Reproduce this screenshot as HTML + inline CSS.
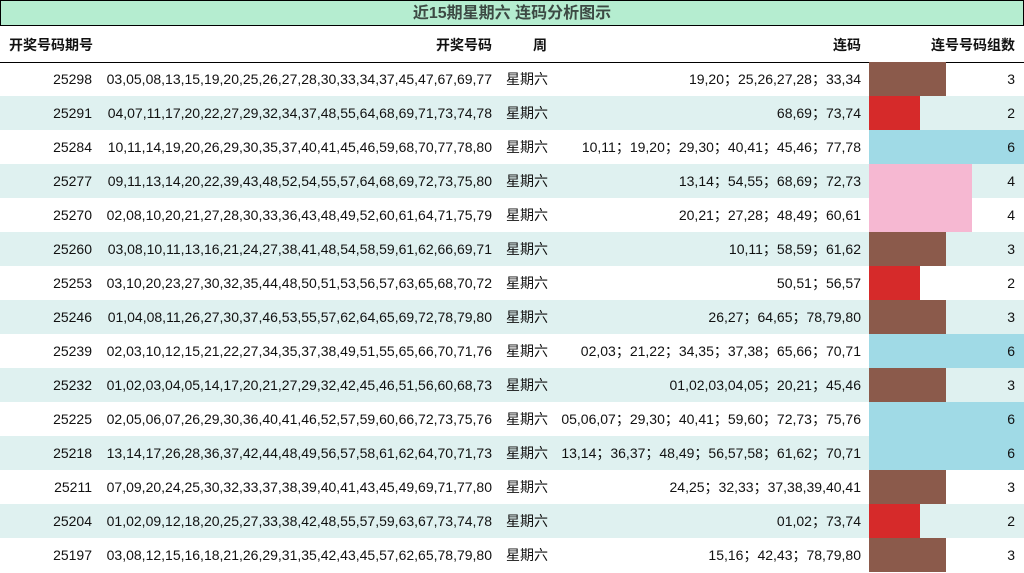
<!DOCTYPE html><html><head><meta charset="utf-8"><style>
body{margin:0;width:1024px;height:573px;overflow:hidden;background:#fff;font-family:"Liberation Sans","Noto Sans CJK SC",sans-serif;font-size:14px;color:#111}
.t{position:absolute;left:0;top:0;width:1022px;height:24px;background:#b5edd0;border:1px solid #000;text-align:center;font-weight:bold;font-size:16px;line-height:25px;color:#3d4a44}
.r{position:absolute;left:0;width:1024px;height:34px;line-height:34px}
.r div{position:absolute;top:0;white-space:nowrap}
.a{right:932px}.b{right:532px}.c{left:506px}.d{right:163px}.n{right:9px}
.bar{height:34px;left:869px}
.h{font-weight:bold;top:27px;height:34px;border-bottom:1px solid #000}
.alt{background:#dff1f0}
</style></head><body>
<div class="t">近15期星期六 连码分析图示</div>
<div class="r h" style="top:28px"><div class="a" style="left:9px;right:auto">开奖号码期号</div><div class="b">开奖号码</div><div class="c" style="left:533px">周</div><div class="d">连码</div><div class="n">连号号码组数</div></div>
<div id="rows"></div>
<script>
var d=[["25298","03,05,08,13,15,19,20,25,26,27,28,30,33,34,37,45,47,67,69,77","19,20；25,26,27,28；33,34",3],
["25291","04,07,11,17,20,22,27,29,32,34,37,48,55,64,68,69,71,73,74,78","68,69；73,74",2],
["25284","10,11,14,19,20,26,29,30,35,37,40,41,45,46,59,68,70,77,78,80","10,11；19,20；29,30；40,41；45,46；77,78",6],
["25277","09,11,13,14,20,22,39,43,48,52,54,55,57,64,68,69,72,73,75,80","13,14；54,55；68,69；72,73",4],
["25270","02,08,10,20,21,27,28,30,33,36,43,48,49,52,60,61,64,71,75,79","20,21；27,28；48,49；60,61",4],
["25260","03,08,10,11,13,16,21,24,27,38,41,48,54,58,59,61,62,66,69,71","10,11；58,59；61,62",3],
["25253","03,10,20,23,27,30,32,35,44,48,50,51,53,56,57,63,65,68,70,72","50,51；56,57",2],
["25246","01,04,08,11,26,27,30,37,46,53,55,57,62,64,65,69,72,78,79,80","26,27；64,65；78,79,80",3],
["25239","02,03,10,12,15,21,22,27,34,35,37,38,49,51,55,65,66,70,71,76","02,03；21,22；34,35；37,38；65,66；70,71",6],
["25232","01,02,03,04,05,14,17,20,21,27,29,32,42,45,46,51,56,60,68,73","01,02,03,04,05；20,21；45,46",3],
["25225","02,05,06,07,26,29,30,36,40,41,46,52,57,59,60,66,72,73,75,76","05,06,07；29,30；40,41；59,60；72,73；75,76",6],
["25218","13,14,17,26,28,36,37,42,44,48,49,56,57,58,61,62,64,70,71,73","13,14；36,37；48,49；56,57,58；61,62；70,71",6],
["25211","07,09,20,24,25,30,32,33,37,38,39,40,41,43,45,49,69,71,77,80","24,25；32,33；37,38,39,40,41",3],
["25204","01,02,09,12,18,20,25,27,33,38,42,48,55,57,59,63,67,73,74,78","01,02；73,74",2],
["25197","03,08,12,15,16,18,21,26,29,31,35,42,43,45,57,62,65,78,79,80","15,16；42,43；78,79,80",3]];
var col={2:"#d62a2a",3:"#8b5a4b",4:"#f6b8d2",6:"#a0dae6"},w={2:51,3:77,4:103,6:155},h="";
d.forEach(function(x,i){h+='<div class="r'+(i%2?' alt':'')+'" style="top:'+(62+i*34)+'px"><div class="bar" style="width:'+w[x[3]]+'px;background:'+col[x[3]]+'"></div><div class="a">'+x[0]+'</div><div class="b">'+x[1]+'</div><div class="c">星期六</div><div class="d">'+x[2]+'</div><div class="n">'+x[3]+'</div></div>';});
document.getElementById("rows").innerHTML=h;
</script>
</body></html>
